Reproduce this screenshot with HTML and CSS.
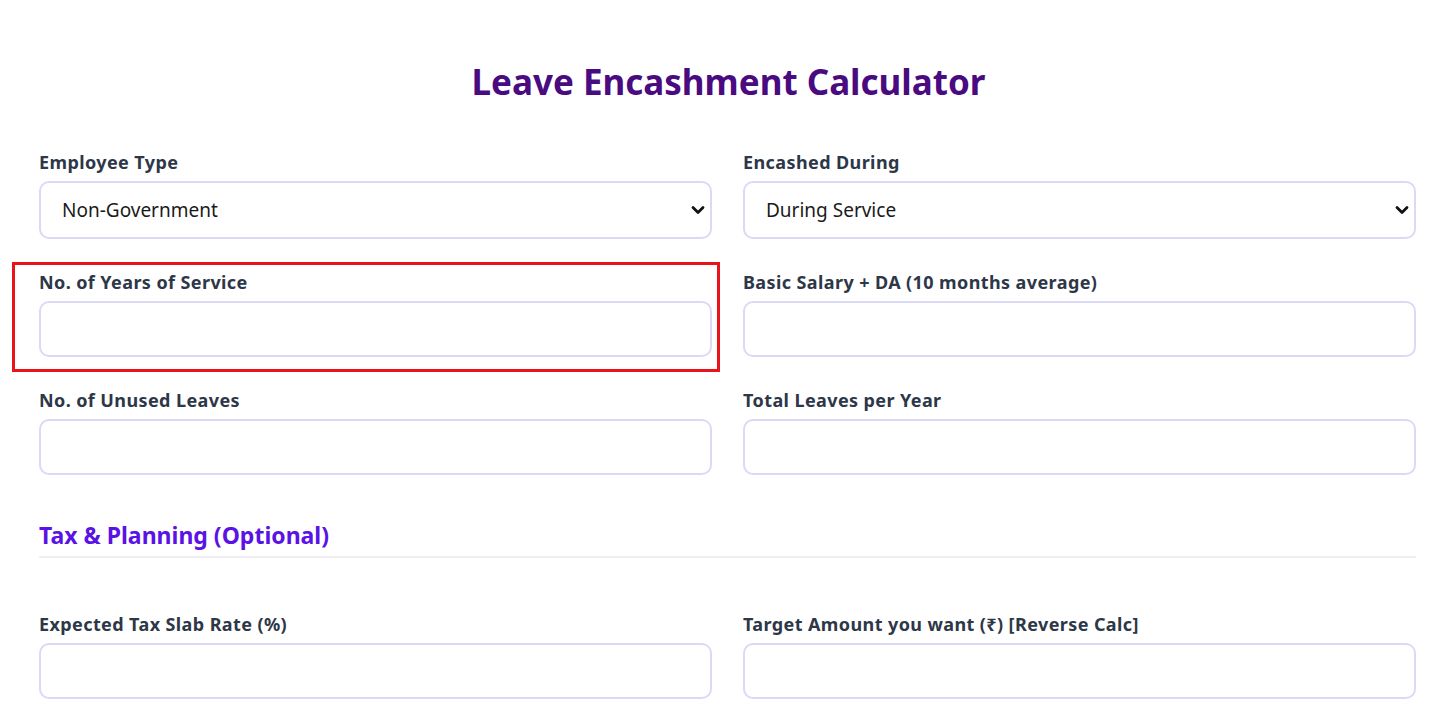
FILE: index.html
```html
<!DOCTYPE html>
<html lang="en">
<head>
<meta charset="utf-8">
<title>Leave Encashment Calculator</title>
<link rel="stylesheet" href="styles.css">
</head>
<body>
<main class="calc">
  <h1 class="title">Leave Encashment Calculator</h1>
  <div class="grid">
    <div class="field">
      <label class="label">Employee Type</label>
      <select class="control select">
        <option>Non-Government</option>
        <option>Government</option>
      </select>
    </div>
    <div class="field">
      <label class="label">Encashed During</label>
      <select class="control select">
        <option>During Service</option>
        <option>At Retirement</option>
      </select>
    </div>
    <div class="field field-highlight">
      <label class="label">No. of Years of Service</label>
      <input class="control input" type="text">
    </div>
    <div class="field">
      <label class="label">Basic Salary + DA (10 months average)</label>
      <input class="control input" type="text">
    </div>
    <div class="field">
      <label class="label">No. of Unused Leaves</label>
      <input class="control input" type="text">
    </div>
    <div class="field">
      <label class="label">Total Leaves per Year</label>
      <input class="control input" type="text">
    </div>
  </div>
  <h2 class="section">Tax &amp; Planning (Optional)</h2>
  <div class="grid grid-tax">
    <div class="field">
      <label class="label">Expected Tax Slab Rate (%)</label>
      <input class="control input" type="text">
    </div>
    <div class="field">
      <label class="label">Target Amount you want (₹) [Reverse Calc]</label>
      <input class="control input" type="text">
    </div>
  </div>
</main>
</body>
</html>
```
FILE: styles.css
```css
html, body {
  margin: 0;
  padding: 0;
  background: #ffffff;
}
body {
  font-family: "Noto Sans", "Open Sans", sans-serif;
  overflow: hidden;
}
.calc {
  padding: 62px 34px 0 39px;
}
.title {
  margin: 0 0 50px 0;
  text-align: center;
  font-size: 35px;
  line-height: 40px;
  font-weight: 700;
  color: #4a0a80;
  padding-left: 2px;
}
.grid {
  display: grid;
  grid-template-columns: 1fr 1fr;
  column-gap: 31px;
  row-gap: 33px;
}
.field {
  display: flex;
  flex-direction: column;
  position: relative;
}
.label {
  font-size: 18px;
  line-height: 20px;
  font-weight: 700;
  letter-spacing: 0.4px;
  color: #2d3748;
  margin-bottom: 9px;
  white-space: nowrap;
}
.control {
  box-sizing: border-box;
  width: 100%;
  border: 2px solid #dcd9f7;
  border-radius: 10px;
  background: #ffffff;
  font-family: inherit;
  font-size: 19px;
  color: #1a1a1a;
  padding: 0 21px;
  outline: none;
}
.select {
  height: 58px;
  appearance: none;
  -webkit-appearance: none;
  background-image: url("data:image/svg+xml,%3Csvg xmlns='http://www.w3.org/2000/svg' width='14' height='10' viewBox='0 0 14 10'%3E%3Cpath d='M2 2.5 L7 7.5 L12 2.5' fill='none' stroke='%23111' stroke-width='2.8' stroke-linecap='round' stroke-linejoin='round'/%3E%3C/svg%3E");
  background-repeat: no-repeat;
  background-position: right 5px center;
  background-size: 14px 10px;
}
.input {
  height: 56px;
}
.field-highlight::after {
  content: "";
  position: absolute;
  top: -10px;
  left: -27px;
  right: -8px;
  bottom: -15px;
  border: 3px solid #e8131b;
  pointer-events: none;
}
.section {
  margin: 45px 0 56px 0;
  padding-bottom: 6px;
  border-bottom: 2px solid #eeeef3;
  font-size: 23px;
  line-height: 30px;
  font-weight: 700;
  color: #5a12e6;
}
```
